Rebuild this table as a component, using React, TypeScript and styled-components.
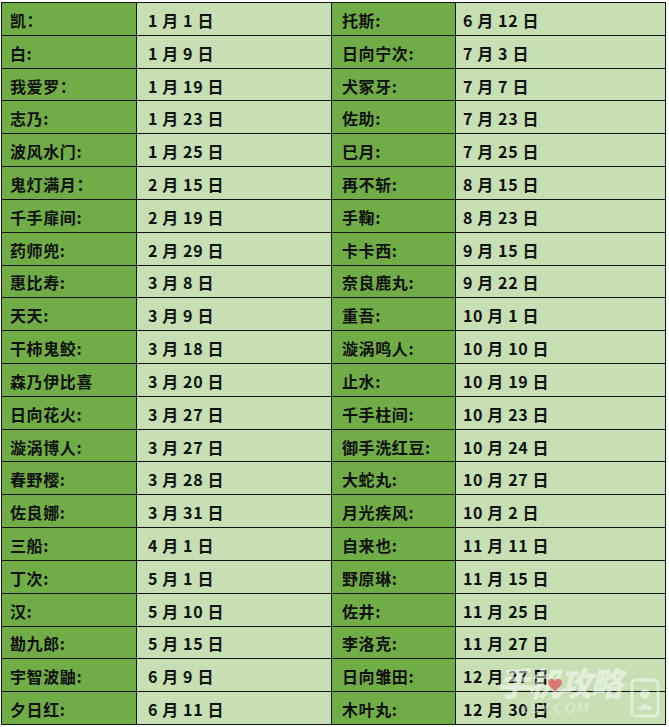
import React from 'react';
import styled, { createGlobalStyle } from 'styled-components';

const GlobalStyle = createGlobalStyle`
  html, body {
    margin: 0;
    padding: 0;
    background: #ffffff;
  }
  body {
    font-family: "Noto Sans CJK SC", "Noto Sans", sans-serif;
  }
`;

const Page = styled.div`
  position: relative;
  width: 669px;
  height: 727px;
  padding: 2px 0 0 1px;
  box-sizing: border-box;
`;

const Table = styled.div`
  display: grid;
  grid-template-columns: 134px 194px 123px 209px;
  grid-template-rows: repeat(22, 1fr);
  gap: 1px;
  padding: 1px;
  width: 665px;
  height: 723px;
  box-sizing: border-box;
  background: #141414;
`;

const Cell = styled.div<{ $dark?: boolean; $pad: number }>`
  display: flex;
  align-items: center;
  padding-left: ${(p) => p.$pad}px;
  padding-top: 2px;
  background: ${(p) => (p.$dark ? '#70ad47' : '#c6e0b4')};
  color: #111;
  font-size: 16px;
  font-weight: 700;
  white-space: nowrap;
  letter-spacing: 0.6px;
`;

const Watermark = styled.div`
  position: absolute;
  left: 497px;
  top: 664px;
  width: 170px;
  height: 60px;
  pointer-events: none;
`;

const MarkTitle = styled.div`
  font-size: 33px;
  font-weight: 900;
  font-style: italic;
  letter-spacing: -2px;
  color: rgba(255, 255, 255, 0.5);
  line-height: 36px;
`;

const MarkSub = styled.div`
  margin-left: 24px;
  font-family: "DejaVu Sans", sans-serif;
  font-size: 14px;
  font-style: italic;
  letter-spacing: 1px;
  color: rgba(255, 255, 255, 0.4);
  line-height: 16px;
`;

const Heart = styled.span`
  position: absolute;
  left: 50px;
  top: 8px;
  color: rgba(220, 70, 70, 0.7);
  font-size: 16px;
`;

const Phone = styled.svg`
  position: absolute;
  left: 133px;
  top: 14px;
`;

const left: [string, string][] = [
  ['凯：', '1 月 1 日'],
  ['白:', '1 月 9 日'],
  ['我爱罗：', '1 月 19 日'],
  ['志乃:', '1 月 23 日'],
  ['波风水门:', '1 月 25 日'],
  ['鬼灯满月：', '2 月 15 日'],
  ['千手扉间:', '2 月 19 日'],
  ['药师兜:', '2 月 29 日'],
  ['惠比寿:', '3 月 8 日'],
  ['天天:', '3 月 9 日'],
  ['干柿鬼鲛:', '3 月 18 日'],
  ['森乃伊比喜', '3 月 20 日'],
  ['日向花火:', '3 月 27 日'],
  ['漩涡博人:', '3 月 27 日'],
  ['春野樱:', '3 月 28 日'],
  ['佐良娜:', '3 月 31 日'],
  ['三船:', '4 月 1 日'],
  ['丁次:', '5 月 1 日'],
  ['汉:', '5 月 10 日'],
  ['勘九郎:', '5 月 15 日'],
  ['宇智波鼬:', '6 月 9 日'],
  ['夕日红:', '6 月 11 日'],
];

const right: [string, string][] = [
  ['托斯:', '6 月 12 日'],
  ['日向宁次:', '7 月 3 日'],
  ['犬冢牙:', '7 月 7 日'],
  ['佐助:', '7 月 23 日'],
  ['巳月:', '7 月 25 日'],
  ['再不斩:', '8 月 15 日'],
  ['手鞠:', '8 月 23 日'],
  ['卡卡西:', '9 月 15 日'],
  ['奈良鹿丸:', '9 月 22 日'],
  ['重吾:', '10 月 1 日'],
  ['漩涡鸣人:', '10 月 10 日'],
  ['止水:', '10 月 19 日'],
  ['千手柱间:', '10 月 23 日'],
  ['御手洗红豆:', '10 月 24 日'],
  ['大蛇丸:', '10 月 27 日'],
  ['月光疾风:', '10 月 2 日'],
  ['自来也:', '11 月 11 日'],
  ['野原琳:', '11 月 15 日'],
  ['佐井:', '11 月 25 日'],
  ['李洛克:', '11 月 27 日'],
  ['日向雏田:', '12 月 27 日'],
  ['木叶丸:', '12 月 30 日'],
];

const App: React.FC = () => {
  return (
    <>
      <GlobalStyle />
      <Page>
        <Table>
          {left.map(([name, date], i) => (
            <React.Fragment key={i}>
              <Cell $dark $pad={8}>{name}</Cell>
              <Cell $pad={11}>{date}</Cell>
              <Cell $dark $pad={10}>{right[i][0]}</Cell>
              <Cell $pad={7}>{right[i][1]}</Cell>
            </React.Fragment>
          ))}
        </Table>
        <Watermark>
          <MarkTitle>手机攻略</MarkTitle>
          <MarkSub>19Y.COM</MarkSub>
          <Heart>♥</Heart>
          <Phone width="30" height="40" viewBox="0 0 30 40">
            <rect x="2" y="2" width="26" height="36" rx="4" fill="none" stroke="rgba(255,255,255,0.45)" strokeWidth="3" />
            <circle cx="15" cy="16" r="5" fill="rgba(255,255,255,0.45)" />
            <path d="M7 32 Q15 20 23 32 Z" fill="rgba(255,255,255,0.45)" />
          </Phone>
        </Watermark>
      </Page>
    </>
  );
};

export default App;
